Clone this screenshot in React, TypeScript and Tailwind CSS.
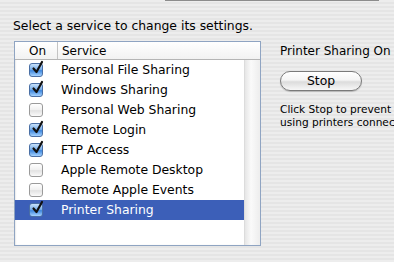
import React from 'react';

const services = [
  { name: 'Personal File Sharing', on: true },
  { name: 'Windows Sharing', on: true },
  { name: 'Personal Web Sharing', on: false },
  { name: 'Remote Login', on: true },
  { name: 'FTP Access', on: true },
  { name: 'Apple Remote Desktop', on: false },
  { name: 'Remote Apple Events', on: false },
  { name: 'Printer Sharing', on: true },
];

const selected = 'Printer Sharing';

const CheckBox = ({ checked }: { checked: boolean }) => (
  <div
    className={`relative w-[14px] h-[14px] rounded-[3px] border ${
      checked
        ? 'border-[#4a6fa5] bg-[linear-gradient(#c9e2fb,#6fa8e6_50%,#3d86dd_55%,#a6d3ff)]'
        : 'border-[#9a9a9a] bg-[linear-gradient(#ffffff,#f0f0f0_50%,#e2e2e2_55%,#fafafa)]'
    }`}
  >
    {checked && (
      <svg viewBox="0 0 14 14" className="absolute left-[1px] top-[-3px] w-[14px] h-[14px] overflow-visible">
        <path d="M2.5 7.5 L5.5 11 L11 1" fill="none" stroke="#111" strokeWidth="2.2" strokeLinecap="round" strokeLinejoin="round" />
      </svg>
    )}
  </div>
);

export default function App() {
  return (
    <div className="w-[394px] h-[262px] overflow-hidden relative font-['DejaVu_Sans',sans-serif] text-black bg-[repeating-linear-gradient(to_bottom,#ededed_0px,#ededed_2px,#e5e5e5_2px,#e5e5e5_4px)]">
      {/* edge of the pane above */}
      <div className="absolute left-[165px] top-0 w-[214px] h-[1px] bg-[#8c8c8c]" />

      <div className="pt-[19px] pl-[13px] text-[12.4px] leading-[14px] whitespace-nowrap">Select a service to change its settings.</div>

      <div className="flex mt-[8px]">
        <div className="shrink-0 ml-[14px] w-[247px] h-[205px] border border-[#8fa4c2] bg-white shadow-[inset_0_1px_2px_rgba(0,0,0,0.25)] flex flex-col">
          <div className="h-[18px] flex items-center text-[12px] border-b border-[#b5b5b5] bg-[linear-gradient(#ffffff,#f2f2f2)]">
            <div className="w-[42px] pl-[14px]">On</div>
            <div className="h-full w-[1px] bg-[#c4c4c4]" />
            <div className="pl-[4px]">Service</div>
          </div>
          <div className="flex flex-1">
            <div className="flex-1">
              {services.map((s) => {
                const sel = s.name === selected;
                return (
                  <div
                    key={s.name}
                    className={`h-[20px] flex items-center text-[12.4px] whitespace-nowrap ${sel ? 'bg-[#3c5fb8] text-white' : ''}`}
                  >
                    <div className="w-[43px] pl-[14px]">
                      <CheckBox checked={s.on} />
                    </div>
                    <div className="pl-[3px]">{s.name}</div>
                  </div>
                );
              })}
            </div>
            <div className="w-[16px] bg-[linear-gradient(to_right,#e6e6e6,#fafafa_40%,#ededed)] border-l border-[#dcdcdc]" />
          </div>
        </div>

        <div className="shrink-0 ml-[19px] pt-[2px] flex flex-col">
          <div className="text-[12px] leading-[16px] whitespace-nowrap">Printer Sharing On</div>
          <button className="mt-[12px] w-[82px] h-[20px] rounded-full border border-[#7a7a7a] bg-[linear-gradient(#ffffff,#f4f4f4_45%,#dcdcdc_55%,#f7f7f7)] text-[12.4px] leading-[18px] shadow-[0_1px_1px_rgba(0,0,0,0.2)]">
            Stop
          </button>
          <div className="mt-[12px] text-[10.6px] leading-[13px] whitespace-nowrap">
            Click Stop to prevent other people from
            <br />
            using printers connected to this computer.
          </div>
        </div>
      </div>
    </div>
  );
}
